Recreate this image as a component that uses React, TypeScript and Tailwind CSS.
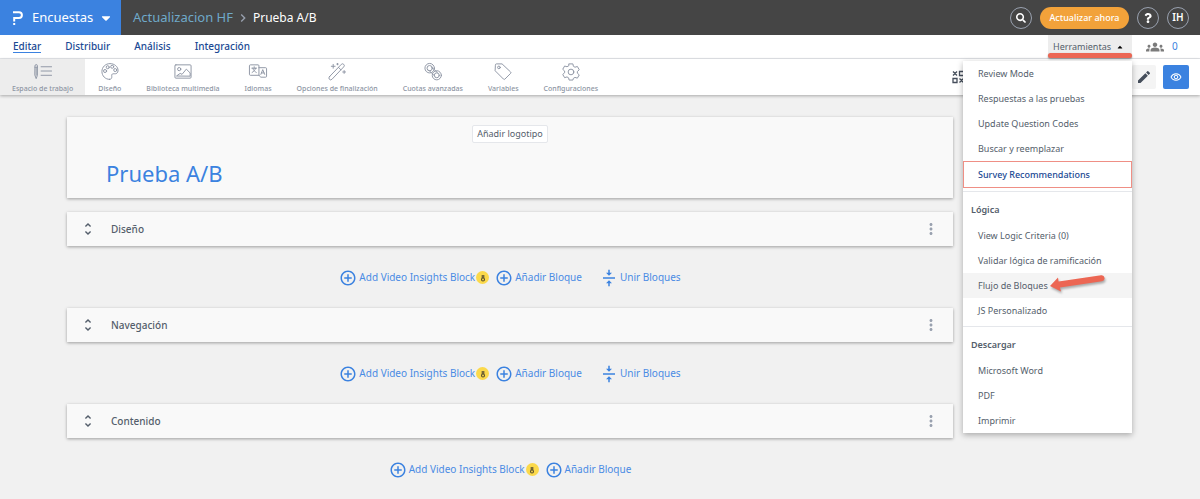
import React from "react";
import { FaSearch, FaCaretUp, FaCaretDown, FaQuestion } from "react-icons/fa";
import {
  MdGroups,
  MdEdit,
  MdOutlineRemoveRedEye,
  MdMoreVert,
  MdUnfoldMore,
  MdAddCircleOutline,
  MdVerticalAlignCenter,
  MdChevronRight,
} from "react-icons/md";

const svgProps = {
  viewBox: "0 0 20 20",
  fill: "none",
  stroke: "currentColor",
  strokeWidth: 1,
  strokeLinecap: "round" as const,
  strokeLinejoin: "round" as const,
  className: "size-5",
};

const WorkspaceIcon = () => (
  <svg {...svgProps}>
    <path d="M1.500 4a1.300 1.300 0 0 1 2.600 0V14l-1.300 3.500L1.500 14zM1.500 5.500h2.600M2.800 6v8M8 5h11M8 9.500h11M8 14h11" />
  </svg>
);

const PaletteIcon = () => (
  <svg {...svgProps}>
    <path d="M9.500 18.300C5 18.300 1.500 14.600 1.500 10S5.200 1.700 10 1.700s8.500 3.300 8.500 7.300c0 2.800-2 3.600-4 3.400-1.700-.2-3 .4-2.700 2 .2 1.700.3 3.900-2.300 3.900z" />
    <circle cx="4.800" cy="9.500" r="1.600" />
    <circle cx="7.600" cy="5.500" r="1.600" />
    <circle cx="12.300" cy="5" r="1.600" />
    <circle cx="15.500" cy="8.500" r="1.600" />
  </svg>
);

const MediaIcon = () => (
  <svg {...svgProps}>
    <rect x="1.500" y="3" width="17" height="14" rx="1" />
    <circle cx="6" cy="7.500" r="1.700" />
    <path d="M3.500 14.500l3.500-2.500 2 1 4.500-5.500 4 4v3z" />
  </svg>
);

const LanguageIcon = () => (
  <svg {...svgProps}>
    <path d="M11 14H2a1 1 0 0 1-1-1V4a1 1 0 0 1 1-1h8a1 1 0 0 1 1 1v10l2 2h5a1 1 0 0 0 1-1V7a1 1 0 0 0-1-1h-7" />
    <path d="M3.500 6.500h5M6 5v1.500M7.500 6.500C7 8.500 5.500 10 3.800 11M4.500 6.500C5 8.500 6.500 10 8.200 11M13 13l2-5 2 5M13.700 11.500h2.600" />
  </svg>
);

const WandIcon = () => (
  <svg {...svgProps}>
    <path d="M2 15.500L14.500 2.500a1.800 1.800 0 0 1 2.600 2.600L4.700 18.200a1.900 1.900 0 0 1-2.700-2.700zM11.500 5.600l2.700 2.700M6 2.500v4M4 4.500h4M17.500 9v3M16 10.500h3M10.500 1.500v1.500M9.800 2.200h1.500" />
  </svg>
);

const QuotaIcon = () => (
  <svg {...svgProps}>
    <circle cx="6.500" cy="6.500" r="5" />
    <circle cx="6.500" cy="6.500" r="2.800" />
    <circle cx="14" cy="14" r="4.800" />
    <circle cx="14" cy="14" r="2.600" />
    <path d="M8.500 5.500l6 5.500M5.500 8.500l6 6" />
  </svg>
);

const TagIcon = () => (
  <svg {...svgProps}>
    <path d="M2 3a1 1 0 0 1 1-1h6l9 8.500a1 1 0 0 1 0 1.500l-6 6a1 1 0 0 1-1.500 0L2 9.500z" />
    <circle cx="5.700" cy="5.700" r="1.400" />
  </svg>
);

const GearIcon = () => (
  <svg {...svgProps}>
    <path d="M8 2h4l.5 2.500 1.700 1 2.500-.8 2 3.500-2 1.800v1.800l2 1.800-2 3.400-2.500-.8-1.700 1L12 19H8l-.5-2.300-1.700-1-2.500.8-2-3.400 2-1.800V9.500l-2-1.800 2-3.500 2.500.8 1.700-1z" />
    <circle cx="10" cy="10.500" r="3" />
  </svg>
);

const QrIcon = () => (
  <svg viewBox="0 0 14 14" className="size-3.5" fill="none" stroke="currentColor" strokeWidth="1.300">
    <path d="M1 1.500l4 4M5 1.500l-4 4M7.500 1.500h5v4h-5zM1 8.500h4v4H1zM7.500 8.500l4 4M11.500 8.500l-4 4" />
  </svg>
);

const Logo = () => (
  <svg viewBox="0 0 12 16" className="h-4 w-3" fill="none" stroke="currentColor" strokeWidth="2">
    <path d="M1 2.200h6a2.800 2.800 0 0 1 0 5.800H2.200v3.500" />
    <path d="M1.200 14h2" />
  </svg>
);

const tabs = ["Editar", "Distribuir", "Análisis", "Integración"];

const tools = [
  { label: "Espacio de trabajo", icon: <WorkspaceIcon /> },
  { label: "Diseño", icon: <PaletteIcon /> },
  { label: "Biblioteca multimedia", icon: <MediaIcon /> },
  { label: "Idiomas", icon: <LanguageIcon /> },
  { label: "Opciones de finalización", icon: <WandIcon /> },
  { label: "Cuotas avanzadas", icon: <QuotaIcon /> },
  { label: "Variables", icon: <TagIcon /> },
  { label: "Configuraciones", icon: <GearIcon /> },
];

const blocks = ["Diseño", "Navegación", "Contenido"];

interface MenuItemProps {
  label: string;
  active?: boolean;
}

const MenuItem: React.FC<MenuItemProps> = ({ label, active }) => (
  <button
    className={`block h-[25px] w-full pl-[15px] text-left text-[9px] ${
      active ? "bg-[#f4f4f4]" : ""
    }`}
  >
    {label}
  </button>
);

const MenuHeading: React.FC<{ label: string }> = ({ label }) => (
  <h3 className="mt-[3px] border-t border-gray-200 px-2 pt-2.5 pb-[5px] text-[9px]/4 font-semibold">
    {label}
  </h3>
);

const ToolsMenu = () => (
  <div className="absolute top-[26px] right-0 w-[169px] bg-white text-[#545e6b] shadow-[0_2px_6px_rgba(0,0,0,0.3)]">
    <MenuItem label="Review Mode" />
    <MenuItem label="Respuestas a las pruebas" />
    <MenuItem label="Update Question Codes" />
    <MenuItem label="Buscar y reemplazar" />
    <button className="block h-[27px] w-full border border-[#ef8f85] pl-3.5 text-left text-[9px] font-medium text-[#1b4a94]">
      Survey Recommendations
    </button>
    <MenuHeading label="Lógica" />
    <MenuItem label="View Logic Criteria (0)" />
    <MenuItem label="Validar lógica de ramificación" />
    <div className="relative">
      <MenuItem label="Flujo de Bloques" active />
      <svg
        viewBox="0 0 58 20"
        className="absolute top-0 left-[86px] h-5 w-[58px] drop-shadow-[1px_2px_1px_rgba(0,0,0,0.3)]"
        fill="#ec6653"
      >
        <path d="M1 13L9 4.500l.6 4L52 2.200a3 3 0 0 1 1 6L11 14.500l1 4z" />
      </svg>
    </div>
    <MenuItem label="JS Personalizado" />
    <MenuHeading label="Descargar" />
    <MenuItem label="Microsoft Word" />
    <MenuItem label="PDF" />
    <MenuItem label="Imprimir" />
  </div>
);

const BlockActions: React.FC<{ last?: boolean }> = ({ last }) => (
  <div className="flex h-[62px] items-center justify-center pt-px text-[10px] text-[#4a8be4]">
    <button className="flex items-center gap-0.5">
      <MdAddCircleOutline className="size-[18px] text-[#3b82e0]" />
      Add Video Insights Block
    </button>
    <span className="mr-1.5 ml-px flex size-[13px] items-center justify-center rounded-full bg-[#fbd94b] text-[#5b5230]">
      <svg viewBox="0 0 8 10" className="h-2 w-1.5" fill="none" stroke="currentColor" strokeWidth="1.500">
        <path d="M3 1v4M5 1v4" />
        <circle cx="4" cy="7" r="2" />
      </svg>
    </span>
    <button className="flex items-center gap-0.5">
      <MdAddCircleOutline className="size-[18px] text-[#3b82e0]" />
      Añadir Bloque
    </button>
    {!last && (
      <button className="ml-[18px] flex items-center gap-0.5">
        <MdVerticalAlignCenter className="size-[18px] text-[#3b82e0]" />
        Unir Bloques
      </button>
    )}
  </div>
);

export default function App() {
  return (
    <div className="min-h-screen bg-[#f1f1f1] font-['Noto_Sans',sans-serif]">
      <header className="flex h-[35px] items-center bg-[#454545] text-white">
        <button className="flex h-full w-[121px] items-center bg-[#3b82e0] pl-3 text-[13px]">
          <Logo />
          <span className="ml-2">Encuestas</span>
          <FaCaretDown className="ml-1.5 size-3.5" />
        </button>
        <nav className="flex items-center pl-3">
          <a href="#" className="text-[13px] text-[#6fa9c9]">
            Actualizacion HF
          </a>
          <MdChevronRight className="mx-0.5 size-4 text-gray-400" />
          <span className="text-[12px]">Prueba A/B</span>
        </nav>
        <div className="ml-auto flex items-center gap-2 pr-[11px]">
          <button
            aria-label="Buscar"
            className="flex size-[22px] items-center justify-center rounded-full border border-gray-400"
          >
            <FaSearch className="size-2.5" />
          </button>
          <button className="h-[22px] w-[89px] rounded-full bg-[#f2a23a] text-[9px] font-medium">
            Actualizar ahora
          </button>
          <button
            aria-label="Ayuda"
            className="flex size-[22px] items-center justify-center rounded-full border border-gray-400"
          >
            <FaQuestion className="size-2.5" />
          </button>
          <button className="flex size-[22px] items-center justify-center rounded-full border border-gray-400 text-[10px] font-semibold">
            IH
          </button>
        </div>
      </header>

      <div className="flex h-6 items-center border-b border-gray-200 bg-white">
        <nav className="flex items-center gap-6 pl-[13px] text-[10px]/3 font-medium text-[#1b4a94]">
          {tabs.map((tab, i) => (
            <a
              key={tab}
              href="#"
              className={`border-b ${i === 0 ? "border-[#3b82e0]" : "border-transparent"}`}
            >
              {tab}
            </a>
          ))}
        </nav>
        <div className="relative z-10 ml-auto h-full w-[84px]">
          <ToolsMenu />
          <button className="flex h-full w-full items-center justify-between bg-[#ededed] pr-2 pl-[5px] text-[9px] text-[#545e6b]">
            Herramientas
            <FaCaretUp className="size-2 text-black" />
          </button>
          <div className="absolute top-[18px] h-[5px] w-full rounded-full bg-[#ec6653] shadow-[0_1px_2px_rgba(0,0,0,0.4)]" />
        </div>
        <div className="flex w-[68px] items-center gap-2 pl-3.5 text-[10px] text-[#3b82e0]">
          <MdGroups className="size-[18px] text-[#7b7b7b]" />
          0
        </div>
      </div>

      <div className="flex h-9 items-center gap-px bg-white text-[#8d95a3] shadow-[0_1px_3px_rgba(0,0,0,0.3)]">
        {tools.map(({ label, icon }, i) => (
          <button
            key={label}
            className={`flex h-full flex-col items-center gap-0.5 px-3 pt-[3px] text-[7px]/3 font-medium ${
              i === 0 ? "bg-[#ededed]" : ""
            }`}
          >
            {icon}
            {label}
          </button>
        ))}
        <button aria-label="Código QR" className="mr-[165px] ml-auto text-[#454e5b]">
          <QrIcon />
        </button>
        <button
          aria-label="Editar tema"
          className="mr-1.5 flex size-6 items-center justify-center rounded-xs bg-[#f4f4f4] text-[#454e5b]"
        >
          <MdEdit className="size-4" />
        </button>
        <button
          aria-label="Vista previa"
          className="mr-[11px] flex h-6 w-[26px] items-center justify-center rounded-xs bg-[#3b82e0] text-white"
        >
          <MdOutlineRemoveRedEye className="size-3" />
        </button>
      </div>

      <main className="pt-[22px] pr-[247px] pl-[67px]">
        <section className="mb-3.5 flex h-[81px] flex-col bg-[#f9f9f9] px-[39px] pt-2 shadow-[0_1px_3px_rgba(0,0,0,0.35)]">
          <button className="self-center rounded-xs border border-gray-200 bg-white px-1 text-[9px]/4 text-[#545e6b]">
            Añadir logotipo
          </button>
          <h1 className="mt-3.5 text-[22px]/8 text-[#3b82e0]">Prueba A/B</h1>
        </section>
        {blocks.map((block, i) => (
          <React.Fragment key={block}>
            <section className="flex h-[34px] items-center bg-[#f9f9f9] px-[13px] text-[#545e6b] shadow-[0_1px_3px_rgba(0,0,0,0.35)]">
              <MdUnfoldMore className="size-4" />
              <h2 className="ml-[15px] text-[10px] font-medium">{block}</h2>
              <button aria-label={`Opciones de ${block}`} className="ml-auto text-gray-400">
                <MdMoreVert className="size-[18px]" />
              </button>
            </section>
            <BlockActions last={i === blocks.length - 1} />
          </React.Fragment>
        ))}
      </main>
    </div>
  );
}
